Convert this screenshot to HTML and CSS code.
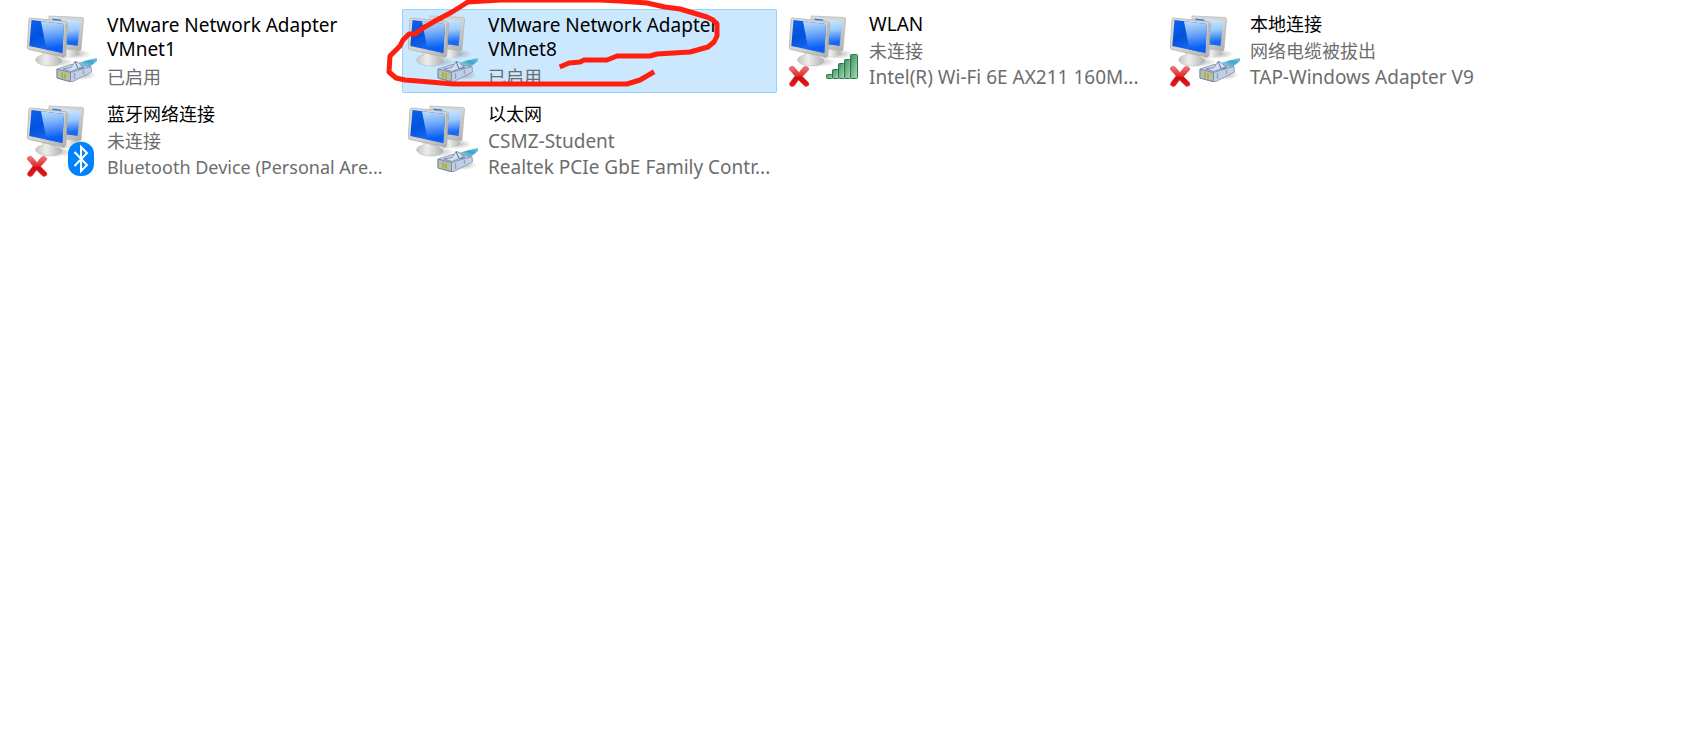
FILE: index.html
```html
<!DOCTYPE html>
<html lang="zh-CN">
<head>
<meta charset="utf-8">
<title>网络连接</title>
<link rel="stylesheet" href="styles.css">
</head>
<body>
<svg class="defs" width="0" height="0" aria-hidden="true">
  <defs>
    <linearGradient id="frame" x1="0" y1="0" x2="1" y2="1"><stop offset="0" stop-color="#dcdcda"/><stop offset=".55" stop-color="#d2d2d0"/><stop offset="1" stop-color="#aaaaa8"/></linearGradient>
    <linearGradient id="dark" x1="0" y1="0" x2=".5" y2="1"><stop offset="0" stop-color="#0b62f0"/><stop offset=".5" stop-color="#0352dc"/><stop offset="1" stop-color="#1d6ff2"/></linearGradient>
    <linearGradient id="glare" x1=".3" y1="0" x2=".4" y2="1"><stop offset="0" stop-color="#b9dcfd"/><stop offset=".4" stop-color="#6fa9f8"/><stop offset=".85" stop-color="#0a5ff8"/></linearGradient>
    <linearGradient id="glare2" x1=".3" y1="0" x2=".4" y2="1"><stop offset="0" stop-color="#d3ebff"/><stop offset=".45" stop-color="#9ccafb"/><stop offset=".9" stop-color="#1568f5"/></linearGradient>
    <linearGradient id="base" x1="0" y1="0" x2="1" y2="0"><stop offset="0" stop-color="#c4c4c2"/><stop offset=".4" stop-color="#ededeb"/><stop offset="1" stop-color="#b2b2b0"/></linearGradient>
    <linearGradient id="red" x1="0" y1="0" x2="0" y2="1"><stop offset="0" stop-color="#f47a7c"/><stop offset=".48" stop-color="#e0292d"/><stop offset=".55" stop-color="#c90d12"/><stop offset="1" stop-color="#f0161c"/></linearGradient>
    <linearGradient id="green" x1="0" y1="0" x2="1" y2="1"><stop offset="0" stop-color="#3f8f60"/><stop offset="1" stop-color="#a9dcb5"/></linearGradient>
    <linearGradient id="cable" x1="0" y1="1" x2="1" y2="0"><stop offset="0" stop-color="#a4dcee"/><stop offset=".6" stop-color="#3da7cc"/><stop offset="1" stop-color="#7cc5dd"/></linearGradient>
    <radialGradient id="shade"><stop offset="0" stop-color="#777" stop-opacity=".55"/><stop offset="1" stop-color="#777" stop-opacity="0"/></radialGradient>
    <g id="computers">
      <ellipse cx="54" cy="45" rx="16" ry="5" fill="url(#shade)"/>
      <ellipse cx="34" cy="53" rx="19" ry="5" fill="url(#shade)"/>
      <path d="M43 39L56 42Q61 44 55 47Q48 50 40 49Z" fill="url(#base)"/>
      <path d="M28 7L61.500 8.500Q63 9 62.500 11L60 40.500Q59.500 42.500 58 42L28 37Z" fill="url(#frame)" stroke="#b4b5b3" stroke-width=".7"/>
      <path d="M31 9.500L59.500 12L56.500 37L44 35Z" fill="url(#glare2)"/>
      <path d="M31 9.500L40 10.500L49 36L44 35Z" fill="#2475e6"/>
      <path d="M21 41L34 44L34 47Q41 49 41 52Q39 57 28 57Q16 56 14.500 51Q15 47 22 46Z" fill="url(#base)" stroke="#b3b3b1" stroke-width=".5"/>
      <path d="M9.500 9L44.500 12.500Q47 13 46.700 15.500L44.500 46.500Q44 48.500 41.500 48L8 40.500Q6 40 6.300 38L8 10Q8.300 9 9.500 9Z" fill="url(#frame)" stroke="#a9aaa8" stroke-width=".7"/>
      <path d="M44.500 14L46 15L44 47L42.500 45Z" fill="#b5b6b3"/>
      <path d="M10.500 11L43 15L41.300 44L8.300 37Z" fill="url(#dark)"/>
      <path d="M20 12.200L43 15L41.300 44L25.500 40.600Z" fill="url(#glare)"/>
    </g>
    <g id="plug">
      <ellipse cx="61" cy="66" rx="14" ry="5" fill="url(#shade)"/>
      <path d="M57 54L65 51.500L76 49V52L71 56Q66 60 58 58Z" fill="url(#cable)"/>
      <path d="M36 60L50 55.500L70 57.500L70.500 63L52 72.500L48 72.500L36 69Z" fill="#c3cfe6" stroke="#8492a8" stroke-width=".8"/>
      <path d="M36 60L49.500 63.500V72.500L36 69Z" fill="#aebcc6" stroke="#6f7d92" stroke-width=".8"/>
      <path d="M49.500 63.500L70 57.500" stroke="#8b9ab5" stroke-width="1"/>
      <path d="M38.500 63L47 65.500V70L38.500 68Z" fill="#c9c75c"/>
      <path d="M41 63.500V68.500M44 64.500V69.500" stroke="#6f7d58" stroke-width=".7"/>
      <path d="M42 60L50 58.500L54 52.500L57.500 53.500L62 58.500L55 60.500L50 62.500Z" fill="#d3def0" stroke="#74849c" stroke-width=".8"/>
      <path d="M54 52.500L57 59.500L63 58.500" fill="none" stroke="#54799c" stroke-width="1"/>
      <path d="M53.500 64V70M62.500 61V65" stroke="#94a3c2" stroke-width="1.500"/>
    </g>
    <path id="cross" d="M6.500 60.500Q5.500 58.500 8 57.500Q10 56.500 11.500 58.500L16 63.500L20.500 58Q22.500 56.500 24.500 58Q27 59.500 25 61.500L19.500 67.500L25.500 73.500Q27 76 24.500 77Q22.500 78 21 76.500L15.500 71L11.500 76.500Q9.500 78.500 7.500 77Q5.500 75.500 7 73.500L12 67Z" fill="url(#red)" stroke="#c94a4c" stroke-width=".5"/>
    <g id="bars" fill="url(#green)" stroke="#28784a" stroke-width="1">
      <rect x="43.500" y="65.500" width="6" height="4" rx="1"/>
      <rect x="49.500" y="60.500" width="6" height="9" rx="1"/>
      <rect x="55.500" y="54.500" width="6" height="15" rx="1"/>
      <rect x="61.500" y="50.500" width="6" height="19" rx="1"/>
      <rect x="67.500" y="45.500" width="7" height="24" rx="1"/>
    </g>
    <g id="bluetooth">
      <rect x="47" y="43" width="26" height="34" rx="12" fill="#0082fc"/>
      <path d="M53.500 53L66 66L60 72V48L66 54L53.500 67" fill="none" stroke="#fff" stroke-width="2"/>
    </g>
  </defs>
</svg>

<main>
  <ul class="connections">
    <li class="cell">
      <button class="connection" type="button">
        <svg class="icon" viewBox="0 0 80 84" aria-hidden="true"><use href="#computers"/><use href="#plug"/></svg>
        <span class="details"><span class="name name-long">VMware Network Adapter VMnet1</span><span class="meta">已启用</span></span>
      </button>
    </li>
    <li class="cell">
      <button class="connection selected" type="button">
        <svg class="icon" viewBox="0 0 80 84" aria-hidden="true"><use href="#computers"/><use href="#plug"/></svg>
        <span class="details"><span class="name name-long">VMware Network Adapter VMnet8</span><span class="meta">已启用</span></span>
      </button>
      <svg class="marker" viewBox="402 9 375 84" aria-hidden="true"><path d="M562 66L569 63L580 62L584 60L607 60L617 56H650L657 54L690 52L708 47L714 42L717 36V24L713 20L707 17L680 9L665 7L647 3L620 1L600 0H500L468 2L452 12L437 20L423 28L415 34H409L403 40L400 46L390 56L389 72L396 78L405 80L430 82L453 84H627L640 80L652 73"/></svg>
    </li>
    <li class="cell">
      <button class="connection" type="button">
        <svg class="icon" viewBox="0 0 80 84" aria-hidden="true"><use href="#computers"/><use href="#cross"/><use href="#bars"/></svg>
        <span class="details"><span class="name latin">WLAN</span><span class="meta">未连接</span><span class="meta latin">Intel(R) Wi-Fi 6E AX211 160M...</span></span>
      </button>
    </li>
    <li class="cell">
      <button class="connection" type="button">
        <svg class="icon" viewBox="0 0 80 84" aria-hidden="true"><use href="#computers"/><use href="#plug"/><use href="#cross"/></svg>
        <span class="details"><span class="name">本地连接</span><span class="meta">网络电缆被拔出</span><span class="meta latin">TAP-Windows Adapter V9</span></span>
      </button>
    </li>
    <li class="cell">
      <button class="connection" type="button">
        <svg class="icon" viewBox="0 0 80 84" aria-hidden="true"><use href="#computers"/><use href="#cross"/><use href="#bluetooth"/></svg>
        <span class="details"><span class="name">蓝牙网络连接</span><span class="meta">未连接</span><span class="meta">Bluetooth Device (Personal Are...</span></span>
      </button>
    </li>
    <li class="cell">
      <button class="connection" type="button">
        <svg class="icon" viewBox="0 0 80 84" aria-hidden="true"><use href="#computers"/><use href="#plug"/></svg>
        <span class="details"><span class="name">以太网</span><span class="meta latin">CSMZ-Student</span><span class="meta latin">Realtek PCIe GbE Family Contr...</span></span>
      </button>
    </li>
  </ul>
</main>
</body>
</html>
```

FILE: styles.css
```css
* {
  box-sizing: border-box;
}

body {
  margin: 0;
  background: #fff;
  font-family: "Noto Sans", "Noto Sans CJK SC", sans-serif;
  font-size: 18px;
  line-height: 26px;
}

.defs {
  position: absolute;
}

.connections {
  display: grid;
  grid-template-columns: repeat(auto-fill, 375px);
  gap: 6px;
  margin: 0;
  padding: 9px 21px;
  list-style: none;
}

.cell {
  position: relative;
}

.connection {
  display: flex;
  gap: 6px;
  width: 100%;
  min-height: 84px;
  padding: 0;
  border: 0;
  border-radius: 2px;
  background: transparent;
  color: #000;
  font: inherit;
  text-align: left;
}

.connection.selected {
  background: #cce8ff;
  box-shadow: inset 0 0 0 1px #99d1ff;
}

.icon {
  flex: none;
  width: 80px;
  height: 84px;
}

.details {
  display: flex;
  flex: 1;
  flex-direction: column;
  min-width: 0;
  padding-top: 2px;
}

.name {
  margin-bottom: 1px;
}

.latin,
.name-long {
  font-size: 19px;
}

.name-long {
  max-width: 250px;
  padding: 2px 0;
  line-height: 24px;
}

.meta {
  color: #6d6d6d;
  white-space: nowrap;
}

.marker {
  position: absolute;
  top: 0;
  left: 0;
  width: 375px;
  height: 84px;
  overflow: visible;
  pointer-events: none;
}

.marker path {
  fill: none;
  stroke: #ff1f0f;
  stroke-width: 5;
  stroke-linejoin: round;
  stroke-linecap: square;
}
```
